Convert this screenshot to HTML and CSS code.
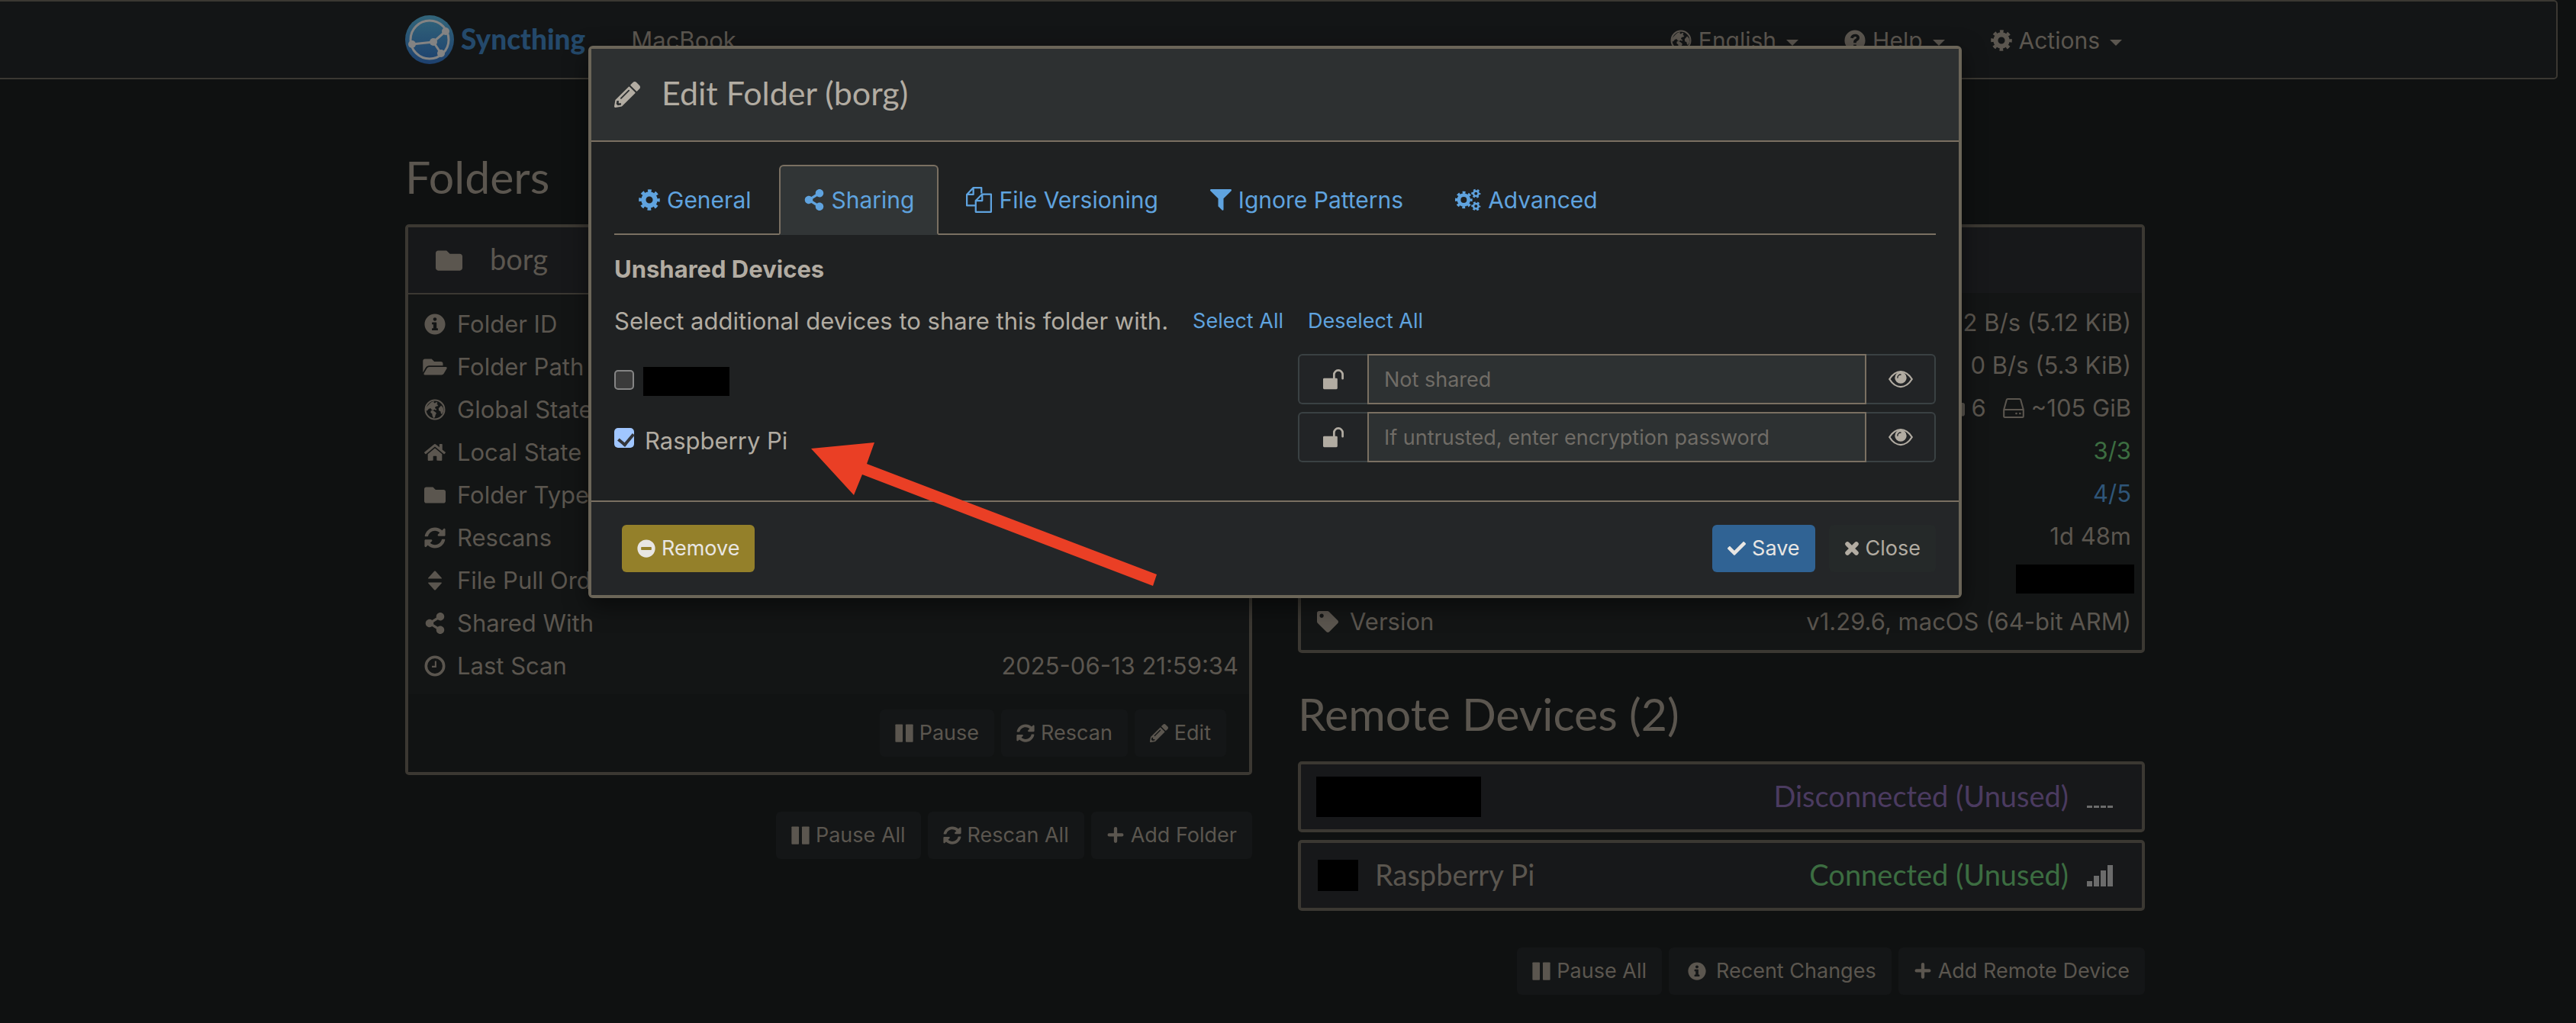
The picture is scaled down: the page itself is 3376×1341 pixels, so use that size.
FILE: index.html
```html
<!DOCTYPE html>
<html lang="en">
<head>
<meta charset="utf-8">
<title>Syncthing</title>
<link rel="stylesheet" href="styles.css">
</head>
<body>
<svg class="sprite" aria-hidden="true">
  <symbol id="folder" viewBox="0 0 512 512"><path d="M464 128H272l-64-64H48C21.490 64 0 85.490 0 112v288c0 26.510 21.490 48 48 48h416c26.510 0 48-21.490 48-48V176c0-26.510-21.490-48-48-48z"/></symbol>
  <symbol id="folder-open" viewBox="0 0 576 512"><path d="M572.694 292.093L500.270 416.248A63.997 63.997 0 0 1 444.989 448H45.025c-18.523 0-30.064-20.093-20.731-36.093l72.424-124.155A64 64 0 0 1 152 256h399.964c18.523 0 30.064 20.093 20.730 36.093zM152 224h328v-48c0-26.510-21.490-48-48-48H272l-64-64H48C21.490 64 0 85.490 0 112v278.046l69.077-118.418C86.214 242.250 117.989 224 152 224z"/></symbol>
  <symbol id="info" viewBox="0 0 512 512"><path d="M256 8C119.043 8 8 119.083 8 256c0 136.997 111.043 248 248 248s248-111.003 248-248C504 119.083 392.957 8 256 8zm0 90c23.196 0 42 16 42 40s-18.804 40-42 40-42-16-42-40 18.804-40 42-40zm72 294c0 6.627-5.373 12-12 12H196c-6.627 0-12-5.373-12-12v-30c0-6.627 5.373-12 12-12h22V262h-22c-6.627 0-12-5.373-12-12v-30c0-6.627 5.373-12 12-12h88c6.627 0 12 5.373 12 12v130h20c6.627 0 12 5.373 12 12v30z"/></symbol>
  <symbol id="question" viewBox="0 0 512 512"><path fill-rule="evenodd" d="M256 8a248 248 0 1 0 0 496 248 248 0 0 0 0-496zM222 356h68v62h-68zM146 190c14-56 54-86 114-86 62 0 106 36 106 88 0 44-26 62-52 78-18 11-24 18-24 32v14h-68v-24c0-36 22-56 46-71 18-11 28-18 28-32 0-16-14-26-33-26-24 0-38 14-51 42z"/></symbol>
  <symbol id="globe" viewBox="0 0 512 512"><circle cx="256" cy="256" r="228" fill="none" stroke="currentColor" stroke-width="38"/><path d="M130 110l50-40 60-14-14 30 30 16 30-28 34 14-20 38 36 18-22 30-40 6-20 40 40 20-10 30-46-20-20 22-42-10-18-36-46 6-44 50-40-14 12-64zM160 280l46-6 58 38 28 32-24 40-12 54-34 24-28-58-4-46-38-32zM404 156l48 54 12 76-32 64-28 12-14-64-40-20-6-52 30-36z"/></symbol>
  <symbol id="home" viewBox="0 0 576 512"><path d="M280.370 148.260L96 300.110V464a16 16 0 0 0 16 16l112.060-.290a16 16 0 0 0 15.920-16V368a16 16 0 0 1 16-16h64a16 16 0 0 1 16 16v95.640a16 16 0 0 0 16 16.050L464 480a16 16 0 0 0 16-16V300L295.670 148.260a12.190 12.190 0 0 0-15.300 0zM571.600 251.470L488 182.560V44.050a12 12 0 0 0-12-12h-56a12 12 0 0 0-12 12v72.610L318.470 43a48 48 0 0 0-61 0L4.340 251.470a12 12 0 0 0-1.600 16.900l25.500 31A12 12 0 0 0 45.150 301l235.220-193.740a12.190 12.190 0 0 1 15.300 0L530.900 301a12 12 0 0 0 16.900-1.600l25.500-31a12 12 0 0 0-1.700-16.930z"/></symbol>
  <symbol id="refresh" viewBox="0 0 512 512"><path d="M370.720 133.280C339.458 104.008 298.888 87.962 255.848 88c-77.458.068-144.328 53.178-162.791 126.850-1.344 5.363-6.122 9.150-11.651 9.150H24.103c-7.498 0-13.194-6.807-11.807-14.176C33.933 94.924 134.813 8 256 8c66.448 0 126.791 26.136 171.315 68.685L463.030 40.970C478.149 25.851 504 36.559 504 57.941V192c0 13.255-10.745 24-24 24H345.941c-21.382 0-32.090-25.851-16.971-40.971l41.750-41.749zM32 296h134.059c21.382 0 32.090 25.851 16.971 40.971l-41.750 41.750c31.262 29.273 71.835 45.319 114.876 45.280 77.418-.070 144.315-53.144 162.787-126.849 1.344-5.363 6.122-9.150 11.651-9.150h57.304c7.498 0 13.194 6.807 11.807 14.176C478.067 417.076 377.187 504 256 504c-66.448 0-126.791-26.136-171.315-68.685L48.970 471.030C33.851 486.149 8 475.441 8 454.059V320c0-13.255 10.745-24 24-24z"/></symbol>
  <symbol id="sort" viewBox="0 0 512 512"><path d="M106 300h300c12 0 18 12 10 22L272 478c-9 9-23 9-32 0L96 322c-8-10-2-22 10-22zM106 212h300c12 0 18-12 10-22L272 34c-9-9-23-9-32 0L96 190c-8 10-2 22 10 22z"/></symbol>
  <symbol id="share" viewBox="0 0 448 512"><path d="M352 320c-22.608 0-43.387 7.819-59.790 20.895l-102.486-64.054a96.551 96.551 0 0 0 0-41.683l102.486-64.054C308.613 184.181 329.392 192 352 192c53.019 0 96-42.981 96-96S405.019 0 352 0s-96 42.981-96 96c0 7.158.790 14.130 2.276 20.841L155.790 180.895C139.387 167.819 118.608 160 96 160c-53.019 0-96 42.981-96 96s42.981 96 96 96c22.608 0 43.387-7.819 59.790-20.895l102.486 64.054A96.301 96.301 0 0 0 256 416c0 53.019 42.981 96 96 96s96-42.981 96-96-42.981-96-96-96z"/></symbol>
  <symbol id="clock" viewBox="0 0 512 512"><circle cx="256" cy="256" r="214" fill="none" stroke="currentColor" stroke-width="66"/><path d="M272 136v136h-88" fill="none" stroke="currentColor" stroke-width="38"/></symbol>
  <symbol id="pencil" viewBox="0 0 512 512"><path d="M497.900 142.100l-46.100 46.100c-4.700 4.700-12.300 4.700-17 0l-111-111c-4.700-4.700-4.700-12.300 0-17l46.100-46.100c18.700-18.700 49.100-18.700 67.900 0l60.100 60.100c18.800 18.700 18.800 49.100 0 67.900zM284.200 99.800L21.600 362.400.400 483.900c-2.900 16.400 11.400 30.600 27.800 27.800l121.500-21.300 262.600-262.600c4.700-4.700 4.700-12.300 0-17l-111-111c-4.800-4.700-12.400-4.700-17.100 0zM124.100 339.900c-5.500-5.500-5.500-14.300 0-19.800l154-154c5.500-5.500 14.300-5.500 19.800 0s5.500 14.300 0 19.800l-154 154c-5.500 5.500-14.300 5.500-19.800 0zM88 424h48v36.300l-64.500 11.300-31.100-31.100L51.700 376H88v48z"/></symbol>
  <symbol id="cog" viewBox="0 0 512 512"><g fill="none" stroke="currentColor"><circle cx="256" cy="256" r="139" stroke-width="112"/><circle cx="256" cy="256" r="218" stroke-width="68" pathLength="16" stroke-dasharray="1 1" stroke-dashoffset="0.5"/></g></symbol>
  <symbol id="cogs" viewBox="0 0 600 512"><g fill="none" stroke="currentColor"><circle cx="200" cy="256" r="112" stroke-width="84"/><circle cx="200" cy="256" r="172" stroke-width="56" pathLength="16" stroke-dasharray="1 1" stroke-dashoffset="0.5"/><circle cx="482" cy="110" r="58" stroke-width="44"/><circle cx="482" cy="110" r="88" stroke-width="38" pathLength="12" stroke-dasharray="1 1" stroke-dashoffset="0.5"/><circle cx="482" cy="402" r="58" stroke-width="44"/><circle cx="482" cy="402" r="88" stroke-width="38" pathLength="12" stroke-dasharray="1 1" stroke-dashoffset="0.5"/></g></symbol>
  <symbol id="files" viewBox="0 0 512 512"><g fill="none" stroke="currentColor" stroke-width="34" stroke-linejoin="round"><path d="M192 368H17V150L145 17h160v110M145 17v133H17"/><path d="M320 144h175v351H192V272zM320 144v128H192"/></g></symbol>
  <symbol id="filter" viewBox="0 0 512 512"><path d="M487.976 0H24.028C2.710 0-8.047 25.866 7.058 40.971L192 225.941V400c0 8 4 16 10 22l84 82c14 12 34 2 34-16V225.941l184.947-184.970C520.021 25.896 509.338 0 487.976 0z"/></symbol>
  <symbol id="unlock" viewBox="0 0 512 512"><rect x="0" y="232" width="344" height="264" rx="26"/><path d="M262 240V148a103 103 0 0 1 206 0v92" fill="none" stroke="currentColor" stroke-width="50" stroke-linecap="round"/></symbol>
  <symbol id="eye" viewBox="0 0 512 512"><path d="M20 256Q120 96 256 96t236 160Q392 416 256 416T20 256z" fill="none" stroke="currentColor" stroke-width="36"/><circle cx="256" cy="226" r="122"/><path d="M190 226a66 66 0 0 1 66-66" fill="none" stroke="#222426" stroke-width="22" stroke-linecap="round"/></symbol>
  <symbol id="minus" viewBox="0 0 512 512"><path fill-rule="evenodd" d="M256 8a248 248 0 1 0 0 496 248 248 0 0 0 0-496zM126 214h260c10 0 16 6 16 16v52c0 10-6 16-16 16H126c-10 0-16-6-16-16v-52c0-10 6-16 16-16z"/></symbol>
  <symbol id="check" viewBox="0 0 512 512"><path d="M173.898 439.404l-166.400-166.400c-9.997-9.997-9.997-26.206 0-36.204l36.203-36.204c9.997-9.998 26.207-9.998 36.204 0L192 312.690 432.095 72.596c9.997-9.997 26.207-9.997 36.204 0l36.203 36.204c9.997 9.997 9.997 26.206 0 36.204l-294.400 294.401c-9.998 9.997-26.207 9.997-36.204-.001z"/></symbol>
  <symbol id="times" viewBox="0 0 400 512"><path d="M75 131l250 250M325 131L75 381" stroke="currentColor" stroke-width="124" stroke-linecap="round"/></symbol>
  <symbol id="plus" viewBox="0 0 448 512"><path d="M224 66v356M46 244h356" stroke="currentColor" stroke-width="92" stroke-linecap="round"/></symbol>
  <symbol id="pause" viewBox="0 0 512 512"><rect x="8" y="8" width="206" height="496" rx="20"/><rect x="298" y="8" width="206" height="496" rx="20"/></symbol>
  <symbol id="tag" viewBox="0 0 512 512"><path d="M0 252.118V48C0 21.490 21.490 0 48 0h204.118a48 48 0 0 1 33.941 14.059l211.882 211.882c18.744 18.745 18.744 49.137 0 67.882L293.823 497.941c-18.745 18.744-49.137 18.744-67.882 0L14.059 286.059A48 48 0 0 1 0 252.118zM112 64c-26.510 0-48 21.490-48 48s21.490 48 48 48 48-21.490 48-48-21.490-48-48-48z"/></symbol>
  <symbol id="hdd" viewBox="0 0 512 512"><g fill="none" stroke="currentColor" stroke-width="38" stroke-linejoin="round"><path d="M22 292L88 56q6-20 26-20h284q20 0 26 20l66 236v160q0 22-22 22H44q-22 0-22-22zM22 292h468"/></g><circle cx="320" cy="384" r="24"/><circle cx="408" cy="384" r="24"/></symbol>
</svg>

<nav class="navbar">
  <div class="container navbar-inner">
    <a class="brand" href="#">
      <svg class="logo" viewBox="0 0 64 64" aria-hidden="true">
        <defs><linearGradient id="g" x1="0" y1="0" x2="0" y2="1"><stop offset="0" stop-color="#32657a"/><stop offset="1" stop-color="#1d406e"/></linearGradient></defs>
        <circle cx="32" cy="32" r="32" fill="url(#g)"/>
        <g fill="none" stroke="#838383" stroke-width="3"><circle cx="32" cy="32" r="25"/><path d="M9 38l28-3 16-14M37 35l10 15"/></g>
        <g fill="#838383"><circle cx="9" cy="38" r="5"/><circle cx="37" cy="35" r="5"/><circle cx="53" cy="21" r="5"/><circle cx="47" cy="50" r="5"/></g>
      </svg>
      <span>Syncthing</span>
    </a>
    <span class="device-title">MacBook</span>
    <div class="menus">
      <button type="button" class="menu"><svg class="icon"><use href="#globe"/></svg>English<i class="caret"></i></button>
      <button type="button" class="menu"><svg class="icon"><use href="#question"/></svg>Help<i class="caret"></i></button>
      <button type="button" class="menu"><svg class="icon"><use href="#cog"/></svg>Actions<i class="caret"></i></button>
    </div>
  </div>
</nav>

<main class="container columns">
  <section>
    <h3>Folders</h3>
    <article class="panel folder">
      <header class="panel-heading"><svg class="icon folder-icon"><use href="#folder"/></svg><h4>borg</h4></header>
      <div class="panel-body">
        <table>
          <tr><th><svg class="icon"><use href="#info"/></svg>Folder ID</th><td></td></tr>
          <tr><th><svg class="icon wide"><use href="#folder-open"/></svg>Folder Path</th><td></td></tr>
          <tr><th><svg class="icon"><use href="#globe"/></svg>Global State</th><td></td></tr>
          <tr><th><svg class="icon"><use href="#home"/></svg>Local State</th><td></td></tr>
          <tr><th><svg class="icon"><use href="#folder"/></svg>Folder Type</th><td></td></tr>
          <tr><th><svg class="icon"><use href="#refresh"/></svg>Rescans</th><td></td></tr>
          <tr><th><svg class="icon"><use href="#sort"/></svg>File Pull Order</th><td></td></tr>
          <tr><th><svg class="icon"><use href="#share"/></svg>Shared With</th><td></td></tr>
          <tr><th><svg class="icon"><use href="#clock"/></svg>Last Scan</th><td>2025-06-13 21:59:34</td></tr>
        </table>
      </div>
      <footer class="panel-footer">
        <button type="button" class="btn"><svg class="icon"><use href="#pause"/></svg>Pause</button>
        <button type="button" class="btn"><svg class="icon"><use href="#refresh"/></svg>Rescan</button>
        <button type="button" class="btn"><svg class="icon"><use href="#pencil"/></svg>Edit</button>
      </footer>
    </article>
    <div class="actions">
      <button type="button" class="btn"><svg class="icon"><use href="#pause"/></svg>Pause All</button>
      <button type="button" class="btn"><svg class="icon"><use href="#refresh"/></svg>Rescan All</button>
      <button type="button" class="btn"><svg class="icon"><use href="#plus"/></svg>Add Folder</button>
    </div>
  </section>

  <section>
    <h3></h3>
    <article class="panel device">
      <header class="panel-heading"></header>
      <div class="panel-body">
        <table>
          <tr><th></th><td>2 B/s (5.12 KiB)</td></tr>
          <tr><th></th><td>0 B/s (5.3 KiB)</td></tr>
          <tr><th></th><td><span class="stat"><svg class="icon"><use href="#folder"/></svg>6</span><span class="stat"><svg class="icon"><use href="#hdd"/></svg>~105 GiB</span></td></tr>
          <tr><th></th><td class="success">3/3</td></tr>
          <tr><th></th><td class="info">4/5</td></tr>
          <tr><th></th><td>1d 48m</td></tr>
          <tr><th></th><td class="ident"><span class="redacted ident-box"></span></td></tr>
          <tr><th><svg class="icon"><use href="#tag"/></svg>Version</th><td>v1.29.6, macOS (64-bit ARM)</td></tr>
        </table>
      </div>
    </article>
    <h3 class="remote">Remote Devices (2)</h3>
    <article class="panel remote-device">
      <span class="redacted name-box"></span>
      <span class="status disconnected">Disconnected (Unused)</span>
      <svg class="signal" viewBox="0 0 34 28" aria-hidden="true"><path d="M0 25h7v3H0zM9 25h7v3H9zM18 25h7v3h-7zM27 25h7v3h-7z"/></svg>
    </article>
    <article class="panel remote-device">
      <span class="redacted avatar-box"></span>
      <h4>Raspberry Pi</h4>
      <span class="status connected">Connected (Unused)</span>
      <svg class="signal" viewBox="0 0 34 28" aria-hidden="true"><path d="M0 21h7v7H0zM9 14h7v14H9zM18 7h7v21h-7zM27 0h7v28h-7z"/></svg>
    </article>
    <div class="actions">
      <button type="button" class="btn"><svg class="icon"><use href="#pause"/></svg>Pause All</button>
      <button type="button" class="btn"><svg class="icon fixed"><use href="#info"/></svg>Recent Changes</button>
      <button type="button" class="btn"><svg class="icon"><use href="#plus"/></svg>Add Remote Device</button>
    </div>
  </section>
</main>

<div class="overlay">
  <div class="modal" role="dialog" aria-labelledby="modal-title">
    <header class="modal-header"><svg class="icon"><use href="#pencil"/></svg><h4 id="modal-title">Edit Folder (borg)</h4></header>
    <form class="modal-body">
      <div class="tabs">
        <a href="#"><svg class="icon"><use href="#cog"/></svg>General</a>
        <a href="#" class="active"><svg class="icon"><use href="#share"/></svg>Sharing</a>
        <a href="#"><svg class="icon large"><use href="#files"/></svg>File Versioning</a>
        <a href="#"><svg class="icon"><use href="#filter"/></svg>Ignore Patterns</a>
        <a href="#"><svg class="icon large"><use href="#cogs"/></svg>Advanced</a>
      </div>
      <h5>Unshared Devices</h5>
      <p class="help">Select additional devices to share this folder with.<a href="#">Select All</a><a href="#">Deselect All</a></p>
      <div class="share-row">
        <label class="choice"><input type="checkbox" aria-label="Device"><span class="redacted choice-box"></span></label>
        <div class="input-group">
          <span class="addon"><svg class="icon"><use href="#unlock"/></svg></span>
          <input type="text" placeholder="Not shared" aria-label="Encryption password">
          <button type="button" class="addon" aria-label="Show password"><svg class="icon"><use href="#eye"/></svg></button>
        </div>
      </div>
      <div class="share-row">
        <label class="choice"><input type="checkbox" checked><span class="choice-name">Raspberry Pi</span></label>
        <div class="input-group">
          <span class="addon"><svg class="icon"><use href="#unlock"/></svg></span>
          <input type="text" placeholder="If untrusted, enter encryption password" aria-label="Encryption password for Raspberry Pi">
          <button type="button" class="addon" aria-label="Show password"><svg class="icon"><use href="#eye"/></svg></button>
        </div>
      </div>
    </form>
    <footer class="modal-footer">
      <button type="button" class="btn warning"><svg class="icon"><use href="#minus"/></svg>Remove</button>
      <button type="button" class="btn primary"><svg class="icon"><use href="#check"/></svg>Save</button>
      <button type="button" class="btn close"><svg class="icon slim"><use href="#times"/></svg>Close</button>
    </footer>
    <svg class="arrow" viewBox="0 0 454 190" aria-hidden="true"><path d="M0 8L83 0 73 28 453 173 448 188 67 42 56 69z"/></svg>
  </div>
</div>
</body>
</html>
```
FILE: styles.css
```css
* { box-sizing: border-box; }

body {
  margin: 0;
  padding-right: 34px;
  min-height: 100vh;
  overflow-x: hidden;
  background: #0f1111;
  color: #5b564f;
  font: 31px/46px Inter, "Liberation Sans", sans-serif;
}

h3, h4, h5, p { margin: 0; font-weight: 400; }
h3, h4, .status { font-family: Lato, sans-serif; }
h4, .status { padding-bottom: 4px; font-size: 38px; }
h3 { min-height: 64px; font-size: 59px; line-height: 64px; margin: 96px 0 30px; }
button, input { font: inherit; color: inherit; }
a { color: #5fa3df; text-decoration: none; }

.sprite { position: absolute; width: 0; height: 0; }
.icon { width: 28px; height: 28px; fill: currentColor; flex: none; }
.icon.large { width: 34px; height: 34px; }
.redacted { background: #000; display: block; flex: none; }

.container { max-width: 2280px; margin: 0 auto; }

/* Top bar */
.navbar {
  margin: 0 -10px;
  border: 2px solid #3b3832;
  border-radius: 5px;
  background: #131516;
}
.navbar-inner { display: flex; align-items: center; height: 100px; }
.brand {
  display: flex;
  align-items: center;
  gap: 9px;
  color: #24496b;
  font: 900 37px/46px Lato, sans-serif;
}
.brand span { padding-bottom: 2px; }
.logo { width: 64px; height: 64px; }
.device-title { margin-left: 60px; padding-top: 2px; }
.menus { display: flex; margin-left: auto; padding-top: 2px; font-size: 30px; }
.menu {
  display: flex;
  align-items: center;
  gap: 9px;
  padding: 0 30px;
  border: 0;
  background: none;
}
.caret {
  margin: 6px 0 0 4px;
  border: 8px solid transparent;
  border-top-color: currentColor;
  border-bottom: 0;
}

/* Main columns */
.columns { display: grid; grid-template-columns: 1fr 1fr; gap: 60px; }

.panel { border: 4px solid #3b3832; border-radius: 5px; background: #131515; }
.panel-heading {
  display: flex;
  align-items: center;
  gap: 36px;
  height: 86px;
  padding: 0 36px;
  background: #17181a;
}
.folder .panel-heading { height: 88px; border-bottom: 2px solid #3b3832; }
.folder-icon { width: 35px; height: 35px; }
.panel-body { padding: 11px 10px 9px; }

table { width: 100%; border-spacing: 0; }
th, td { height: 56px; padding: 5px 4px 5px 10px; text-align: left; font-weight: 400; white-space: nowrap; }
th .icon { width: 28px; margin: 0 15px 0 1px; vertical-align: -3px; }
td { text-align: right; }
td .icon { margin-right: 9px; vertical-align: -3px; }
th .icon.wide { width: 34px; margin: 0 12px 0 -2px; }
.stat + .stat { margin-left: 22px; }
.success, .connected { color: #3c6d41; }
.info { color: #2f5578; }
.disconnected { color: #4b3b60; }
.ident { padding-right: 0; }
.ident-box { width: 155px; height: 38px; margin-left: auto; }

.panel-footer { padding: 20px 30px; background: #111313; }
.panel-footer, .actions { display: flex; justify-content: flex-end; gap: 9px; }
.actions { margin-top: 48px; }

.btn {
  display: flex;
  align-items: center;
  gap: 8px;
  height: 62px;
  padding: 0 20px;
  border: 0;
  border-radius: 6px;
  background: #141617;
  font-size: 27px;
}
.btn .icon { width: 24px; height: 24px; }
.btn .icon.slim { width: 20px; }
.btn .icon.fixed { margin: 0 5px; }

.remote { margin: 48px 0 30px; }
.remote-device {
  display: flex;
  align-items: center;
  height: 93px;
  margin-bottom: 10px;
  padding: 0 38px 0 20px;
  background: #17181a;
}
.remote-device + .actions { margin-top: 48px; }
.remote-device h4 { margin-left: 22px; }
.status { margin-left: auto; }
.signal { width: 34px; height: 28px; margin-left: 24px; fill: #6b6b6b; }
.name-box { width: 216px; height: 53px; }
.avatar-box { width: 53px; height: 41px; margin-left: 2px; }

/* Dialog */
.overlay { position: absolute; top: 60px; left: 0; right: 34px; }
.modal {
  position: relative;
  max-width: 1800px;
  margin: 0 auto;
  border: 4px solid #6b6558;
  border-radius: 6px;
  background: #1f2122;
  color: #b2aca2;
  box-shadow: 0 10px 30px rgba(0, 0, 0, .5);
}
.modal-header {
  display: flex;
  align-items: center;
  gap: 28px;
  height: 122px;
  padding: 0 30px;
  border-bottom: 2px solid #7a7062;
  background: #2d3031;
}
.modal-header .icon { width: 34px; height: 34px; }
.modal-header h4 { font-size: 43px; }
.modal-body { padding: 30px 30px 50px; }

.tabs { display: flex; gap: 4px; border-bottom: 2px solid #7a7062; font-size: 30px; }
.tabs a {
  display: flex;
  align-items: center;
  gap: 9px;
  height: 92px;
  margin-bottom: -2px;
  padding: 0 30px;
  border: 2px solid transparent;
  border-radius: 6px 6px 0 0;
}
.tabs .active { border-color: #7a7062; border-bottom-color: #313536; background: #313536; }

h5 { margin-top: 22px; font-size: 31px; font-weight: 700; }
.help { display: flex; gap: 32px; margin: 22px 0 20px; }
.help a { font-size: 27px; }

.share-row { display: grid; grid-template-columns: 1fr 1fr; gap: 60px; }
.share-row + .share-row { margin-top: 10px; }
.choice { display: flex; align-items: center; gap: 12px; padding-top: 2px; }
.choice input {
  appearance: none;
  width: 26px;
  height: 26px;
  margin: 0;
  border: 2px solid #858585;
  border-radius: 5px;
  background: #3b3b3b;
}
.choice input:checked { position: relative; border: 0; background: #a0c6ff; }
.choice input:checked::after {
  content: "";
  position: absolute;
  left: 9px;
  top: 3px;
  width: 9px;
  height: 16px;
  border: solid #34363a;
  border-width: 0 4px 4px 0;
  transform: rotate(40deg);
}
.choice-box { width: 113px; height: 38px; margin-top: 4px; }
.choice-name { margin: 8px 0 0 2px; }

.input-group { display: flex; }
.input-group input {
  flex: 1;
  min-width: 0;
  height: 66px;
  padding: 0 20px;
  border: 2px solid #7a7062;
  background: #2d3132;
  font-size: 27px;
}
.input-group input::placeholder { color: #706c66; opacity: 1; }
.addon {
  display: flex;
  align-items: center;
  justify-content: center;
  width: 91px;
  border: 2px solid #3a4143;
  background: #222426;
}
.addon:first-child { border-right: 0; border-radius: 6px 0 0 6px; }
.addon:last-child { border-left: 0; border-radius: 0 6px 6px 0; }
.addon:last-child .icon { width: 32px; height: 32px; }

.modal-footer {
  display: flex;
  gap: 18px;
  padding: 30px 30px 30px 40px;
  border-top: 2px solid #7a7062;
  background: #242628;
}
.btn.warning { margin-right: auto; background: #94802a; color: #e8e6e3; }
.btn.primary { background: #306394; color: #e8e6e3; }
.btn.close { background: #252929; }

.arrow {
  position: absolute;
  left: 288px;
  top: 516px;
  width: 454px;
  height: 190px;
  fill: #ea3f25;
}
```
